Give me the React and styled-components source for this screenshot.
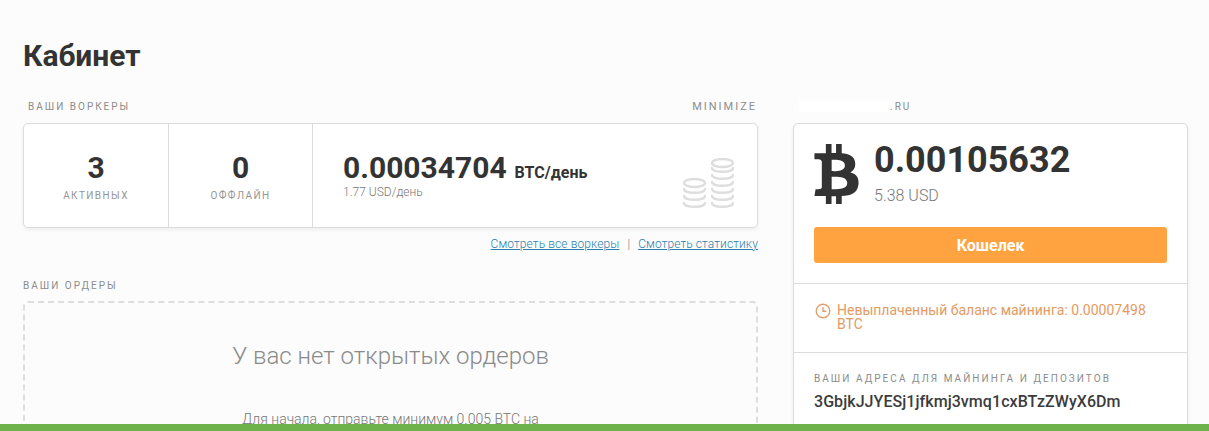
import React from "react";
import styled, { createGlobalStyle } from "styled-components";
import { FaBtc } from "react-icons/fa";

const Global = createGlobalStyle`
  html, body { margin: 0; height: 100%; overflow: hidden; background: #fcfcfc; }
  body { font-family: Roboto, "Liberation Sans", sans-serif; color: #333; }
`;

const Page = styled.div`
  padding: 39px 21px 0 23px;
  height: 431px;
  box-sizing: border-box;
  overflow: hidden;
`;

const Title = styled.h1`
  margin: 0 0 27px;
  font-size: 30px;
  line-height: 34px;
  font-weight: 700;
  color: #333;
`;

const Columns = styled.div`
  display: grid;
  grid-template-columns: 735px 395px;
  column-gap: 35px;
`;

const Column = styled.div`
  min-width: 0;
`;

const LabelRow = styled.div`
  display: flex;
  justify-content: space-between;
  height: 14px;
  margin-bottom: 9px;
  padding: ${(p) => p.$padding || "0 1px 0 5px"};
`;

const Label = styled.span`
  font-size: ${(p) => p.$size || 10}px;
  line-height: 14px;
  letter-spacing: 2px;
  color: #8c8c8c;
  text-transform: uppercase;
`;

const Masked = styled.span`
  display: inline-block;
  width: 90px;
  height: 12px;
  margin-right: 1px;
  vertical-align: -2px;
  background: #fff;
`;

const Card = styled.div`
  background: #fff;
  border: 1px solid #dcdcdc;
  border-radius: 5px;
  box-shadow: 0 2px 4px rgba(0, 0, 0, 0.06);
`;

const WorkerCard = styled(Card)`
  display: flex;
  height: 105px;
  box-sizing: border-box;
`;

const Stat = styled.div`
  width: ${(p) => p.$width}px;
  flex: none;
  border-right: 1px solid #dcdcdc;
  text-align: center;
  padding-top: 26px;
  box-sizing: border-box;
`;

const StatValue = styled.div`
  font-size: 30px;
  line-height: 36px;
  font-weight: 700;
  color: #333;
`;

const StatLabel = styled.div`
  margin-top: 3px;
  font-size: 10px;
  line-height: 14px;
  letter-spacing: 1.4px;
  color: #969696;
`;

const Earnings = styled.div`
  flex: 1;
  display: flex;
  justify-content: space-between;
  padding: 26px 23px 0 30px;
`;

const Rate = styled.div`
  font-size: 30px;
  line-height: 36px;
  font-weight: 700;
  color: #333;
`;

const RateUnit = styled.span`
  margin-left: 8px;
  font-size: 16px;
  font-weight: 700;
`;

const RateSub = styled.div`
  margin-top: -6px;
  font-size: 12px;
  line-height: 14px;
  font-weight: 300;
  color: #777;
`;

const Coins = styled.svg`
  width: 51px;
  height: 50px;
  margin-top: 8px;
  fill: none;
  stroke: #dedede;
  stroke-width: 2.4;
  stroke-linecap: round;
`;

const Links = styled.div`
  display: flex;
  justify-content: flex-end;
  margin-top: 9px;
  font-size: 12px;
  line-height: 14px;
  font-weight: 300;
  letter-spacing: 0.1px;
  color: #777;
`;

const TextLink = styled.a`
  color: #2a7fae;
  text-decoration: underline;
`;

const Pipe = styled.span`
  margin: 0 8px;
`;

const OrdersLabel = styled(LabelRow)`
  margin-top: 28px;
  margin-bottom: 8px;
  padding: 0;
`;

const Dashed = styled.div`
  height: 160px;
  border: 2px dashed #dedede;
  border-radius: 5px;
  text-align: center;
  box-sizing: border-box;
`;

const EmptyTitle = styled.div`
  margin-top: 38px;
  font-size: 24px;
  line-height: 30px;
  font-weight: 300;
  color: #8a8a8a;
`;

const EmptyText = styled.div`
  margin-top: 39px;
  font-size: 14px;
  line-height: 18px;
  font-weight: 300;
  color: #777;
`;

const WalletCard = styled(Card)`
  height: 400px;
  box-sizing: border-box;
`;

const Section = styled.div`
  padding: ${(p) => p.$padding};
  border-bottom: ${(p) => (p.$last ? "none" : "1px solid #dcdcdc")};
`;

const Balance = styled.div`
  display: flex;
  height: 87px;
`;

const BtcIcon = styled(FaBtc)`
  width: 45px;
  height: 60px;
  margin-top: 4px;
  color: #333;
  flex: none;
`;

const BalanceText = styled.div`
  margin-left: 15px;
`;

const BalanceValue = styled.div`
  font-size: 36px;
  line-height: 40px;
  font-weight: 700;
  color: #333;
`;

const BalanceUsd = styled.div`
  margin-top: 6px;
  font-size: 16px;
  line-height: 20px;
  font-weight: 300;
  color: #777;
`;

const OrangeButton = styled.button`
  display: block;
  width: 100%;
  height: 36px;
  padding: 0;
  border: 0;
  border-radius: 3px;
  background: #ffa340;
  color: #fff;
  font-family: inherit;
  font-size: 16px;
  font-weight: 700;
`;

const Notice = styled.div`
  display: flex;
  gap: 6px;
  font-size: 14px;
  line-height: 14px;
  color: #e49a63;
`;

const ClockIcon = styled.svg`
  width: 16px;
  height: 16px;
  flex: none;
  fill: none;
  stroke: #e3a06f;
  stroke-width: 1.4;
`;

const AddressLabel = styled.div`
  font-size: 10px;
  line-height: 14px;
  letter-spacing: 2.05px;
  color: #8c8c8c;
`;

const Address = styled.div`
  margin-top: 6px;
  font-size: 16px;
  line-height: 20px;
  font-weight: 500;
  letter-spacing: 0.06px;
  color: #3c3c3c;
`;

const GreenBar = styled.div`
  position: fixed;
  left: 0;
  right: 0;
  bottom: 0;
  height: 7px;
  background: #6db24a;
`;

// rings are counted upward from the base of the pile
const CoinStack = ({ cx, top, rings }) => (
  <>
    <ellipse cx={cx} cy={top} rx="10.5" ry="4" />
    {Array.from({ length: rings }, (_, i) => (
      <path key={i} d={`M${cx - 10.5} ${45 - i * 7}c0 5 21 5 21 0`} />
    ))}
  </>
);

export default function App() {
  return (
    <>
      <Global />
      <Page>
        <Title>Кабинет</Title>
        <Columns>
          <Column>
            <LabelRow>
              <Label>Ваши воркеры</Label>
              <Label $size={11}>Minimize</Label>
            </LabelRow>
            <WorkerCard>
              <Stat $width={145}>
                <StatValue>3</StatValue>
                <StatLabel>АКТИВНЫХ</StatLabel>
              </Stat>
              <Stat $width={144}>
                <StatValue>0</StatValue>
                <StatLabel>ОФФЛАЙН</StatLabel>
              </Stat>
              <Earnings>
                <div>
                  <Rate>
                    0.00034704<RateUnit>BTC/день</RateUnit>
                  </Rate>
                  <RateSub>1.77 USD/день</RateSub>
                </div>
                <Coins viewBox="0 0 51 50">
                  <CoinStack cx={11.5} top={25} rings={3} />
                  <CoinStack cx={39.5} top={5} rings={6} />
                </Coins>
              </Earnings>
            </WorkerCard>
            <Links>
              <TextLink>Смотреть все воркеры</TextLink>
              <Pipe>|</Pipe>
              <TextLink>Смотреть статистику</TextLink>
            </Links>
            <OrdersLabel>
              <Label>Ваши ордеры</Label>
            </OrdersLabel>
            <Dashed>
              <EmptyTitle>У вас нет открытых ордеров</EmptyTitle>
              <EmptyText>Для начала, отправьте минимум 0.005 BTC на</EmptyText>
            </Dashed>
          </Column>
          <Column>
            <LabelRow $padding="0 0 0 6px">
              <Label>
                <Masked />.RU
              </Label>
            </LabelRow>
            <WalletCard>
              <Section $padding="16px 20px 20px 20px">
                <Balance>
                  <BtcIcon />
                  <BalanceText>
                    <BalanceValue>0.00105632</BalanceValue>
                    <BalanceUsd>5.38 USD</BalanceUsd>
                  </BalanceText>
                </Balance>
                <OrangeButton>Кошелек</OrangeButton>
              </Section>
              <Section $padding="19px 20px 21px 21px">
                <Notice>
                  <ClockIcon viewBox="0 0 16 16">
                    <circle cx="8" cy="8" r="6.8" />
                    <path d="M8 4v4.3h3.4" />
                  </ClockIcon>
                  <span>Невыплаченный баланс майнинга: 0.00007498 BTC</span>
                </Notice>
              </Section>
              <Section $padding="19px 20px" $last>
                <AddressLabel>ВАШИ АДРЕСА ДЛЯ МАЙНИНГА И ДЕПОЗИТОВ</AddressLabel>
                <Address>3GbjkJJYESj1jfkmj3vmq1cxBTzZWyX6Dm</Address>
              </Section>
            </WalletCard>
          </Column>
        </Columns>
      </Page>
      <GreenBar />
    </>
  );
}
